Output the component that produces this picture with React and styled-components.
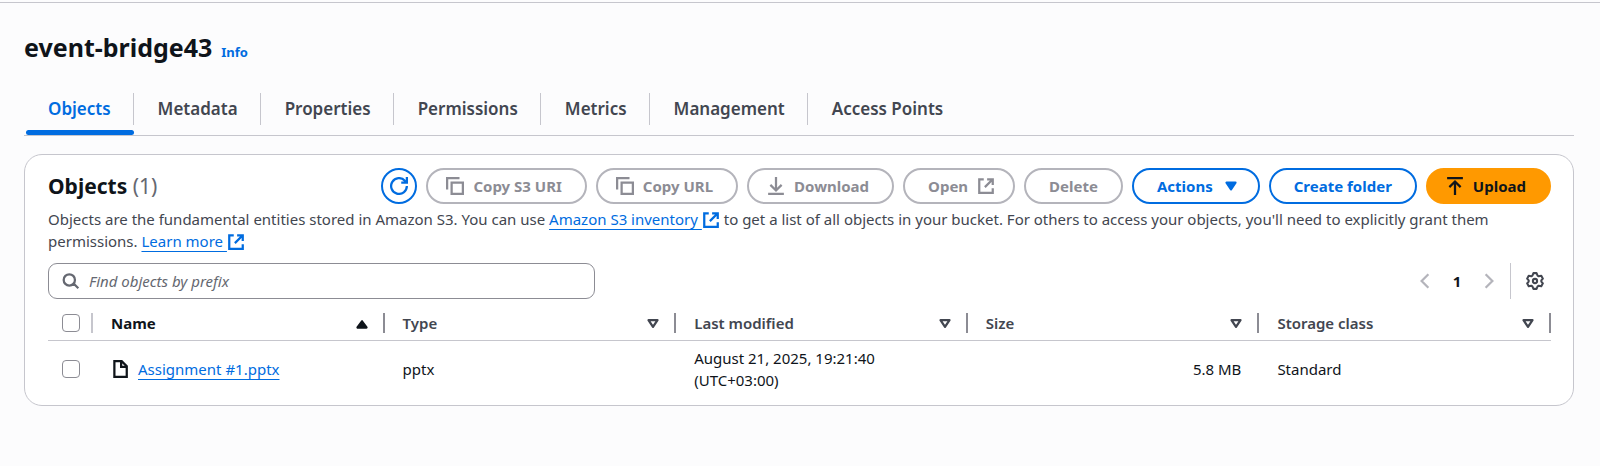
import React from "react";
import styled, { createGlobalStyle, css } from "styled-components";

const color = {
  page: "#fcfcfd",
  surface: "#ffffff",
  text: "#0f141a",
  body: "#424650",
  muted: "#656871",
  link: "#006ce0",
  line: "#c6c6cd",
  control: "#8c8c94",
  disabledLine: "#b4b4bb",
  primary: "#ff9900",
};

const GlobalStyle = createGlobalStyle`
  *, *::before, *::after { box-sizing: border-box; }
  body {
    margin: 0;
    background: ${color.page};
    color: ${color.text};
    font-family: "Noto Sans", "Open Sans", sans-serif;
    font-size: 15px;
    line-height: 22px;
  }
  button, input { font: inherit; }
`;

const Page = styled.div`
  border-top: 1px solid ${color.line};
  margin-top: 2px;
  padding: 27px 26px 24px 24px;
`;

const PageHeader = styled.header`
  display: flex;
  align-items: baseline;
  gap: 9px;
`;

const PageTitle = styled.h1`
  margin: 0;
  font-size: 25px;
  line-height: 34px;
  font-weight: 700;
`;

const InfoLink = styled.a`
  color: ${color.link};
  font-size: 13px;
  font-weight: 700;
  text-decoration: none;
`;

const Tabs = styled.nav`
  display: flex;
  margin-top: 21px;
  padding-left: 2px;
  border-bottom: 1px solid ${color.line};
`;

const Tab = styled.a`
  position: relative;
  padding: 13px 23px 15px 24px;
  font-size: 17px;
  line-height: 22px;
  font-weight: 600;
  text-decoration: none;
  color: ${(p) => (p.$active ? color.link : color.body)};

  &:first-child { padding-left: 22px; }

  &:not(:last-child)::before {
    content: "";
    position: absolute;
    right: 0;
    top: 8px;
    height: 32px;
    border-right: 1px solid ${color.line};
  }

  ${(p) =>
    p.$active &&
    css`
      &::after {
        content: "";
        position: absolute;
        left: 0;
        right: 0;
        bottom: 0;
        height: 5px;
        border-radius: 3px;
        background: ${color.link};
      }
    `}
`;

const Card = styled.section`
  margin-top: 18px;
  padding: 13px 22px 8px 23px;
  border: 1px solid ${color.line};
  border-radius: 18px;
  background: ${color.surface};
`;

const CardHeader = styled.div`
  display: flex;
  justify-content: space-between;
  align-items: center;
  gap: 9px;
`;

const CardTitle = styled.h2`
  margin: 0;
  font-size: 21px;
  line-height: 28px;
  font-weight: 700;
`;

const Count = styled.span`
  color: ${color.muted};
  font-weight: 400;
`;

const ButtonRow = styled.div`
  display: flex;
  gap: 9px;
`;

const Button = styled.button`
  display: inline-flex;
  align-items: center;
  justify-content: center;
  gap: 9px;
  height: 36px;
  min-width: 36px;
  padding-block: 0;
  padding-left: ${(p) => (p.$round ? 0 : p.$icon === "start" ? 18 : 23)}px;
  padding-right: ${(p) => (p.$round ? 0 : p.$icon === "end" ? 18 : 23)}px;
  border: 2px solid ${color.link};
  border-radius: 18px;
  background: ${color.surface};
  color: ${color.link};
  font-weight: 700;
  white-space: nowrap;

  &:disabled {
    border-color: ${color.disabledLine};
    color: ${color.control};
  }

  ${(p) =>
    p.$primary &&
    css`
      border-color: ${color.primary};
      background: ${color.primary};
      color: ${color.text};
    `}
`;

const Description = styled.p`
  margin: 4px 0 11px;
  color: ${color.body};
`;

const Link = styled.a`
  color: ${color.link};
  text-decoration: underline;
  text-decoration-thickness: 1px;
  text-underline-offset: 4px;
`;

const Icon = styled.svg`
  flex: none;
  width: 18px;
  height: 18px;
  fill: none;
  stroke: currentColor;
  stroke-width: 2;
  vertical-align: ${(p) => (p.$inline ? "-4px" : "middle")};
`;

const Toolbar = styled.div`
  display: flex;
  justify-content: space-between;
  align-items: center;
`;

const Search = styled.label`
  display: flex;
  align-items: center;
  gap: 9px;
  width: 547px;
  height: 36px;
  padding: 0 13px;
  border: 1px solid ${color.control};
  border-radius: 9px;
  color: ${color.muted};
`;

const SearchInput = styled.input`
  flex: 1;
  min-width: 0;
  padding: 0;
  border: 0;
  outline: 0;
  background: transparent;
  color: ${color.text};

  &::placeholder {
    color: ${color.muted};
    font-style: italic;
    opacity: 1;
  }
`;

const Controls = styled.div`
  display: flex;
  align-items: center;
  gap: 12px;
`;

const Pager = styled.div`
  display: flex;
  align-items: center;
  gap: 14px;
`;

const IconButton = styled.button`
  display: flex;
  padding: 0;
  border: 0;
  background: transparent;
  color: ${color.body};

  &:disabled { color: ${color.disabledLine}; }
`;

const PageNumber = styled.button`
  padding: 0;
  border: 0;
  width: 18px;
  background: transparent;
  color: ${color.text};
  font-weight: 700;
`;

const Settings = styled.div`
  display: flex;
  align-items: center;
  height: 36px;
  padding: 0 7px 0 15px;
  border-left: 1px solid ${color.line};
`;

const Table = styled.table`
  width: 100%;
  margin-top: 7px;
  table-layout: fixed;
  border-collapse: separate;
  border-spacing: 0;
`;

const SelectCol = styled.col`
  width: 45px;
`;

const Th = styled.th`
  height: 35px;
  padding: 0;
  border-bottom: 1px solid ${color.line};
  text-align: left;
  color: ${(p) => (p.$sorted ? color.text : color.body)};
  font-weight: ${(p) => (p.$sorted ? 700 : 600)};
`;

const HeadCell = styled.div`
  display: flex;
  align-items: center;
  justify-content: space-between;
  height: 20px;
  padding: 0 ${(p) => (p.$select ? 11 : 12)}px 0 ${(p) => (p.$select ? 14 : 18)}px;
  border-right: 2px solid ${(p) => (p.$select ? color.line : color.control)};
`;

const Td = styled.td`
  height: 56px;
  padding: 0 18px;
  text-align: ${(p) => (p.$right ? "right" : "left")};

  &:first-child { padding: 0 0 0 14px; }
`;

const ItemName = styled.div`
  display: flex;
  align-items: center;
  gap: 9px;
`;

const Checkbox = styled.input`
  appearance: none;
  display: block;
  width: 18px;
  height: 18px;
  margin: 0;
  border: 1px solid ${color.control};
  border-radius: 4px;
  background: ${color.surface};
`;

const ICONS = {
  refresh: <path d="M10 5h5V0M15 8a7 7 0 1 1-1.8-4.7L15 5" />,
  copy: <path d="M1 11V1h11M5 5h10v10h-10z" />,
  download: <path d="M1 15h14M13 7l-5 5-5-5M8 0v12" />,
  upload: <path d="M15 1H1M3 9l5-5 5 5M8 4v12" />,
  external: <path d="M9 2h5v5M7 9l7-7M14 10v4H2V2h4" />,
  file: <path d="M3 1h6.500l4.500 4.500v9.500h-11zM9 1v5h5" />,
  search: <path d="M10.500 10.500l4 4M6.500 12a5 5 0 1 0 0-10 5 5 0 0 0 0 10z" />,
  prev: <path d="M11 2L5 8l6 6" />,
  next: <path d="M5 2l6 6-6 6" />,
  sorted: <path d="M4 12h8L8 6.500z" fill="currentColor" strokeLinejoin="round" />,
  sortable: <path d="M4 5.500h8L8 11.500z" strokeLinejoin="round" />,
  caret: <path d="M4 5h8l-4 6z" fill="currentColor" strokeLinejoin="round" />,
  settings: (
    <>
      <path
        strokeLinejoin="round"
        strokeWidth="1.8"
        d="M6.600 1h2.800l.9 2.200 1 .6 2.300-.4 1.400 2.500L13.600 7.500v1l1.400 1.600-1.400 2.500-2.300-.4-1 .6-.9 2.200H6.600l-.9-2.200-1-.6-2.300.4L1 10.100l1.400-1.600v-1L1 5.900l1.400-2.500 2.300.4 1-.6z"
      />
      <circle cx="8" cy="8" r="1.900" strokeWidth="1.800" />
    </>
  ),
};

function Glyph({ name, inline }) {
  return (
    <Icon viewBox="0 0 16 16" $inline={inline} aria-hidden="true">
      {ICONS[name]}
    </Icon>
  );
}

const TABS = ["Objects", "Metadata", "Properties", "Permissions", "Metrics", "Management", "Access Points"];

const COLUMNS = ["Name", "Type", "Last modified", "Size", "Storage class"];

export default function App() {
  return (
    <>
      <GlobalStyle />
      <Page>
        <PageHeader>
          <PageTitle>event-bridge43</PageTitle>
          <InfoLink href="#info">Info</InfoLink>
        </PageHeader>
        <Tabs aria-label="Bucket sections">
          {TABS.map((tab, i) => (
            <Tab key={tab} href={`#${tab}`} $active={i === 0}>
              {tab}
            </Tab>
          ))}
        </Tabs>
        <Card>
          <CardHeader>
            <CardTitle>
              Objects <Count>(1)</Count>
            </CardTitle>
            <ButtonRow>
              <Button $round aria-label="Refresh"><Glyph name="refresh" /></Button>
              <Button $icon="start" disabled><Glyph name="copy" />Copy S3 URI</Button>
              <Button $icon="start" disabled><Glyph name="copy" />Copy URL</Button>
              <Button $icon="start" disabled><Glyph name="download" />Download</Button>
              <Button $icon="end" disabled>Open<Glyph name="external" /></Button>
              <Button disabled>Delete</Button>
              <Button $icon="end">Actions<Glyph name="caret" /></Button>
              <Button>Create folder</Button>
              <Button $icon="start" $primary><Glyph name="upload" />Upload</Button>
            </ButtonRow>
          </CardHeader>
          <Description>
            Objects are the fundamental entities stored in Amazon S3. You can use{" "}
            <Link href="#inventory">Amazon S3 inventory <Glyph name="external" inline /></Link> to get a list of
            all objects in your bucket. For others to access your objects, you'll need to explicitly grant them
            permissions. <Link href="#learn">Learn more <Glyph name="external" inline /></Link>
          </Description>
          <Toolbar>
            <Search>
              <Glyph name="search" />
              <SearchInput type="text" placeholder="Find objects by prefix" aria-label="Find objects by prefix" />
            </Search>
            <Controls>
              <Pager>
                <IconButton disabled aria-label="Previous page"><Glyph name="prev" /></IconButton>
                <PageNumber>1</PageNumber>
                <IconButton disabled aria-label="Next page"><Glyph name="next" /></IconButton>
              </Pager>
              <Settings>
                <IconButton aria-label="Preferences"><Glyph name="settings" /></IconButton>
              </Settings>
            </Controls>
          </Toolbar>
          <Table>
            <colgroup>
              <SelectCol />
              {COLUMNS.map((name) => <col key={name} />)}
            </colgroup>
            <thead>
              <tr>
                <Th>
                  <HeadCell $select><Checkbox type="checkbox" aria-label="Select all objects" /></HeadCell>
                </Th>
                {COLUMNS.map((name, i) => (
                  <Th key={name} $sorted={i === 0}>
                    <HeadCell>
                      {name}
                      <Glyph name={i === 0 ? "sorted" : "sortable"} />
                    </HeadCell>
                  </Th>
                ))}
              </tr>
            </thead>
            <tbody>
              <tr>
                <Td><Checkbox type="checkbox" aria-label="Select Assignment #1.pptx" /></Td>
                <Td>
                  <ItemName>
                    <Glyph name="file" />
                    <Link href="#file">Assignment #1.pptx</Link>
                  </ItemName>
                </Td>
                <Td>pptx</Td>
                <Td>August 21, 2025, 19:21:40<br />(UTC+03:00)</Td>
                <Td $right>5.8 MB</Td>
                <Td>Standard</Td>
              </tr>
            </tbody>
          </Table>
        </Card>
      </Page>
    </>
  );
}
